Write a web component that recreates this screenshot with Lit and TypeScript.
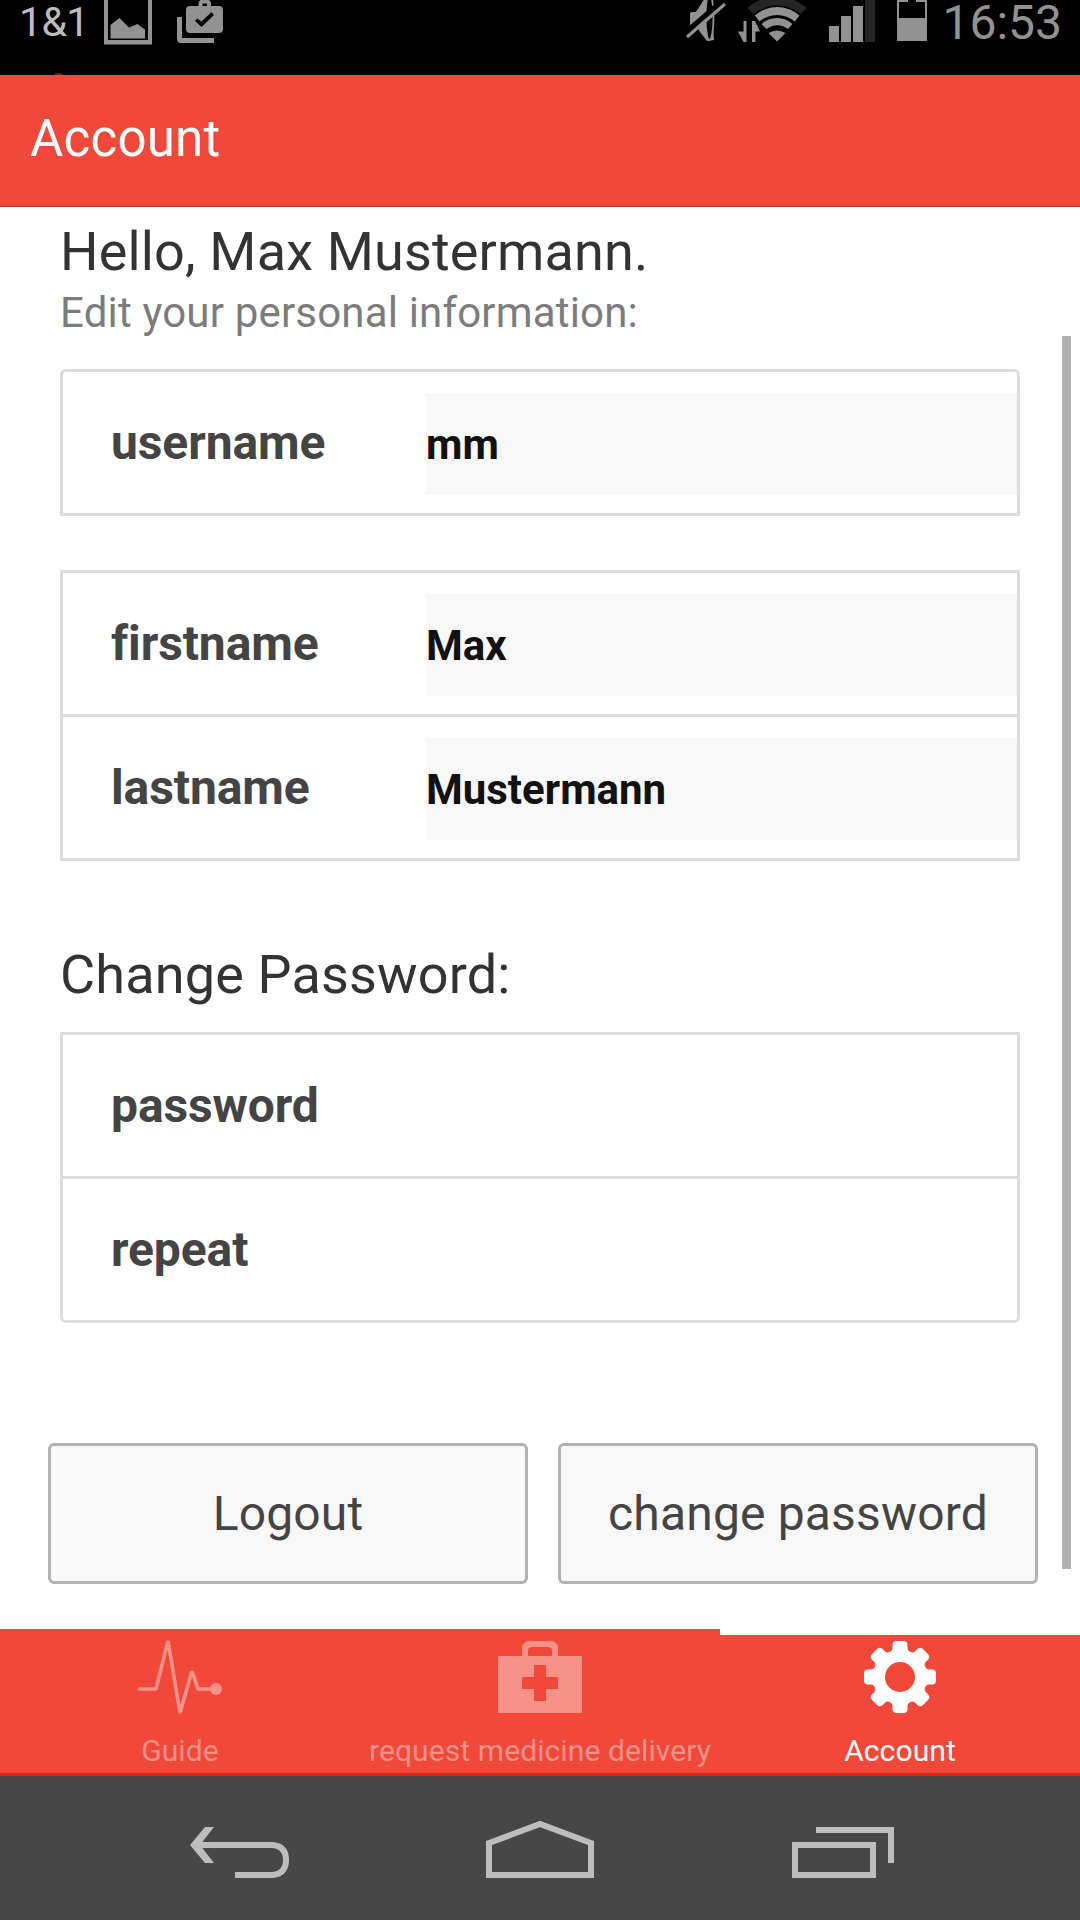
import { LitElement, html, svg, css } from "lit";
import { customElement, property } from "lit/decorators.js";

@customElement("status-bar")
class StatusBar extends LitElement {
  static styles = css`
    :host { display: block; height: 75px; background: #000; overflow: hidden; }
    .bar { position: relative; height: 75px; }
    .icons { position: absolute; inset: 0; }
    .text { position: absolute; top: 0; white-space: nowrap; }
    .carrier { left: 19px; line-height: 44px; font-size: 41px; letter-spacing: -0.6px; color: #bdbdbd; }
    .clock { right: 18px; line-height: 46px; font-size: 48px; color: #929292; }
  `;
  render() {
    return html`<div class="bar">
      <svg class="icons" width="1080" height="75" viewBox="0 0 1080 75">
        <g fill="#929292">
          <path fill-rule="evenodd" d="M104 -4H152V44.5H104ZM108 0V40H148V0Z" />
          <path d="M110.5 38.5V25L119.5 18L129 27.5L137.5 24L145 29.5V38.5Z" />
          <path fill-rule="evenodd" d="M190 6H219A4 4 0 0 1 223 10V29A4 4 0 0 1 219 33H190A4 4 0 0 1 186 29V10A4 4 0 0 1 190 6ZM197 18.5L195 21L201.5 27L214 15L211.5 12L201.5 21.5Z" />
          <path d="M177 17H182V38H214V43H181Q177 43 177 39Z" />
        </g>
        <path d="M200.500 7V4Q200.500 1.500 203 1.500H206.500Q209 1.500 209 4V7" fill="none" stroke="#929292" stroke-width="4" />
        <g fill="#929292">
          <path d="M690 14Q690 12 692 12H696L705 -2H711L714 40L707 41L700 32L697 27H693Q690 27 690 24Z" />
          <ellipse cx="709.500" cy="17" rx="4" ry="23" fill="#000" stroke="#929292" stroke-width="1.800" />
        </g>
        <path d="M684 34L722 1" stroke="#000" stroke-width="5" />
        <path d="M687 37L725 4" stroke="#929292" stroke-width="3" />
        <path d="M738 31.500H743.500V21H746.500V42H743.500ZM752 42V21H755L760 31.500H755.500V42Z" fill="#929292" />
        <path d="M747.500 7.700A45 45 0 0 1 806.500 7.700L801 14A38 38 0 0 0 753 14Z" fill="#252525" />
        <g fill="#929292">
          <path d="M754.800 15.500A34 34 0 0 1 799.500 15.500L794.700 21.500A27 27 0 0 0 759.500 21.500Z" />
          <path d="M761.500 24A23 23 0 0 1 792.500 24L788 29A17 17 0 0 0 766.500 29Z" />
          <path d="M768.500 33Q777 28 785.500 33L777 41.500Z" />
          <path d="M829 26H839V42H829ZM841 16H851V42H841ZM853 6H863V42H853Z" />
          <path d="M897 -4H927V41H897ZM899 2V18H925V2H916V0H908V2Z" fill-rule="evenodd" />
        </g>
        <path d="M865 0H875V42H865Z" fill="#252525" />
        <path d="M54 75Q54 73 58.500 73T63 75Z" fill="#5c201b" />
      </svg>
      <span class="text carrier">1&amp;1</span>
      <span class="text clock">16:53</span>
    </div>`;
  }
}

@customElement("form-row")
class FormRow extends LitElement {
  @property() label = "";
  @property() value = "";
  static styles = css`
    :host { display: flex; height: 144px; box-sizing: border-box; padding-top: 21px; }
    .label { width: 363px; box-sizing: border-box; padding-left: 48px; font-size: 48px; line-height: 99px; font-weight: 700; letter-spacing: -0.1px; font-variant-ligatures: none; color: #444; }
    .value { flex: 1; height: 102px; background: #f8f8f8; font-size: 42px; line-height: 104px; font-weight: 700; color: #111; }
  `;
  render() {
    return html`<div class="label">${this.label}</div>
      ${this.value ? html`<div class="value">${this.value}</div>` : ""}`;
  }
}

const pulse = svg`<g><path d="M0 51H18L30 3L42 75L54 33L60 51H76" fill="none" stroke="currentColor" stroke-width="3.6" stroke-linejoin="bevel"/><circle cx="78" cy="51" r="6" fill="currentColor"/></g>`;
const medkit = svg`<path fill="currentColor" fill-rule="evenodd" d="M1 18H24V11Q24 3 32 3H52Q60 3 60 11V18H83Q84 18 84 19V74Q84 75 83 75H1Q0 75 0 74V19Q0 18 1 18ZM30 18H54V13Q54 9 50 9H34Q30 9 30 13ZM36 27V39H24V51H36V63H48V51H60V39H48V27Z"/>`;
const tooth = "M-7.500 -24V-32Q-7.500 -36 -3.500 -36H3.500Q7.500 -36 7.500 -32V-29Q8 -25 12 -24.500L14 -18H-14L-12 -24.500Q-8 -25 -7.500 -29Z";
const gear = svg`<g transform="translate(42 39)" fill="currentColor">
  ${[0, 45, 90, 135, 180, 225, 270, 315].map((a) => svg`<path d=${tooth} transform="rotate(${a})"/>`)}
  <circle r="20.500" fill="none" stroke="currentColor" stroke-width="11"/></g>`;

@customElement("app-root")
class AppRoot extends LitElement {
  static styles = css`
    :host { display: block; font-family: Roboto, "Liberation Sans", sans-serif; }
    .screen { display: flex; flex-direction: column; width: 1080px; height: 1920px; background: #fff; overflow: hidden; }
    .header { height: 132px; box-sizing: border-box; padding-left: 30px; background: #f1483a; border-bottom: 1px solid #b3352b; color: #fff; font-size: 51px; line-height: 127px; letter-spacing: 0.25px; }
    .content { position: relative; height: 1422px; box-sizing: border-box; padding: 15px 60px 0; }
    .title { margin: 0; font-size: 54px; line-height: 60px; font-weight: 400; letter-spacing: 0.16px; color: #333; white-space: nowrap; }
    .sub { margin: 4px 0 0; font-size: 42px; line-height: 54px; letter-spacing: 0.18px; color: #7c7c7c; }
    .card { box-sizing: border-box; border: 3px solid #ddd; }
    .card.top { border-radius: 6px 6px 0 0; }
    .card.bottom { border-radius: 0 0 6px 6px; }
    .card.first { margin-top: 29px; }
    .card.names { margin-top: 54px; }
    .card.pass { margin-top: 27px; }
    .card form-row:first-child { height: 141px; }
    .divided { border-top: 3px solid #ddd; }
    .section { margin-top: 84px; }
    .buttons { display: flex; gap: 30px; margin: 120px -18px 0 -12px; }
    .button { flex: 1; height: 141px; box-sizing: border-box; border: 3px solid #b2b2b2; border-radius: 6px; background: #f8f8f8; color: #444; font-family: inherit; font-size: 48px; line-height: 134px; letter-spacing: 0.16px; padding: 0; text-align: center; }
    .thumb { position: absolute; left: 1062px; top: 129px; width: 9px; height: 1233px; background: #b2b2b2; }
    .tabs { display: flex; height: 147px; box-sizing: border-box; background: #f1483a; border-bottom: 3px solid #e42012; }
    .tab { flex: 1; display: flex; flex-direction: column; align-items: center; box-sizing: border-box; padding-top: 9px; color: #f79289; font-size: 30px; line-height: 36px; letter-spacing: 0.1px; white-space: nowrap; }
    .tab.active { color: #fff; border-top: 6px solid #fff; padding-top: 3px; }
    .tab svg { display: block; margin-bottom: 17px; overflow: visible; }
    .nav { height: 144px; background: #474747; }
    .nav svg { display: block; }
  `;
  render() {
    return html`<div class="screen">
      <status-bar></status-bar>
      <div class="header">Account</div>
      <div class="content">
        <h2 class="title">Hello, Max Mustermann.</h2>
        <p class="sub">Edit your personal information:</p>
        <div class="card top first"><form-row label="username" value="mm"></form-row></div>
        <div class="card names">
          <form-row label="firstname" value="Max"></form-row>
          <form-row class="divided" label="lastname" value="Mustermann"></form-row>
        </div>
        <h2 class="title section">Change Password:</h2>
        <div class="card bottom pass">
          <form-row label="password"></form-row>
          <form-row class="divided" label="repeat"></form-row>
        </div>
        <div class="buttons">
          <button class="button">Logout</button>
          <button class="button">change password</button>
        </div>
        <div class="thumb"></div>
      </div>
      <div class="tabs">
        <div class="tab"><svg width="84" height="78">${pulse}</svg>Guide</div>
        <div class="tab"><svg width="84" height="78">${medkit}</svg>request medicine delivery</div>
        <div class="tab active"><svg width="84" height="78">${gear}</svg>Account</div>
      </div>
      <div class="nav">
        <svg width="1080" height="144" viewBox="0 0 1080 144" fill="none" stroke="#bcbdbc" stroke-width="6">
          <path d="M196 69H272Q286 70 286 84T272 99H235" />
          <path d="M190 69L205 51H214L200 69L214 87H205Z" fill="#bcbdbc" stroke="none" />
          <path d="M489 99V67L540 48L591 67V99Z" />
          <path d="M795 69H873V99H795ZM816 54H891V87" />
        </svg>
      </div>
    </div>`;
  }
}
